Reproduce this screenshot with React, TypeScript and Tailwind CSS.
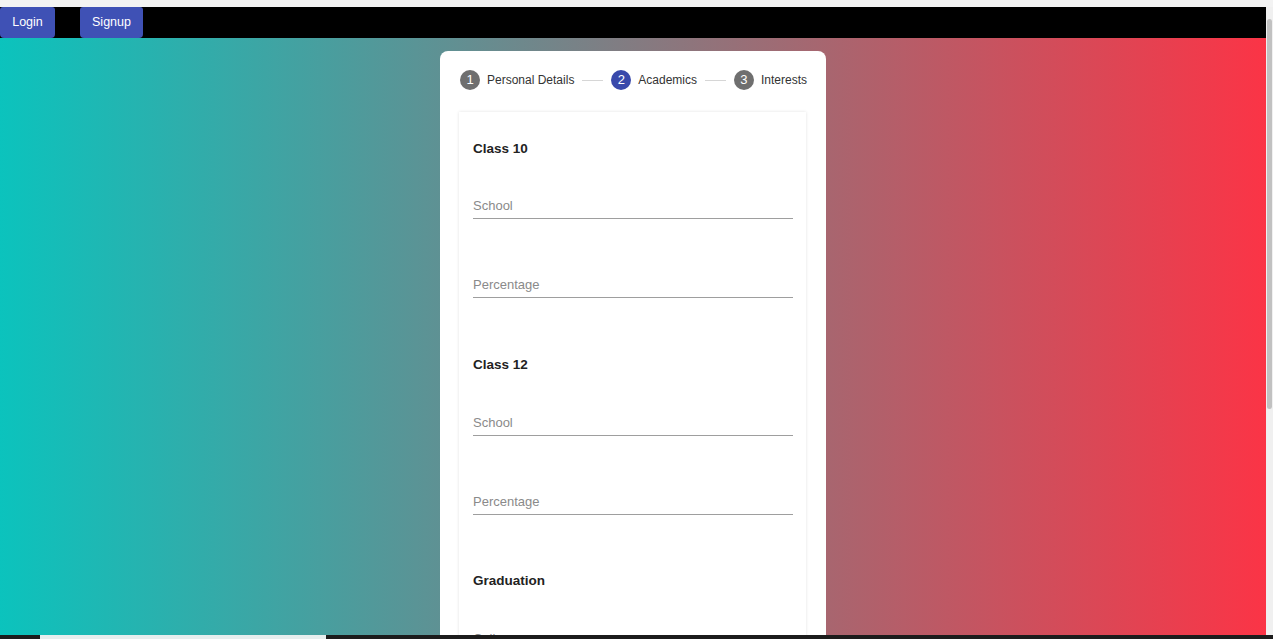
import React from "react";

const steps = [
  { n: 1, label: "Personal Details", active: false },
  { n: 2, label: "Academics", active: true },
  { n: 3, label: "Interests", active: false },
];

function Field({ label, mt }: { label: string; mt: string }) {
  return (
    <div
      className={`${mt} h-[32px] flex items-end pb-[2px] border-b border-[#9e9e9e] text-[13px] leading-[20px] text-[#8a8a8a]`}
    >
      {label}
    </div>
  );
}

function Heading({ text, mt }: { text: string; mt: string }) {
  return (
    <div className={`${mt} h-[20px] text-[13.5px] leading-[20px] font-bold text-[#222]`}>
      {text}
    </div>
  );
}

export default function App() {
  return (
    <div
      className="h-[639px] w-full flex flex-col overflow-hidden bg-[#f1f1f1]"
      style={{ fontFamily: '"Liberation Sans", Arial, sans-serif' }}
    >
      <div className="h-[7px] bg-[#f3f3f3]" />
      <div className="flex-1 flex min-h-0">
        <div className="flex-1 flex flex-col min-w-0">
          <nav className="h-[31px] bg-black flex items-stretch">
            <button className="w-[55px] bg-[#3f51b5] text-white text-[12.5px] rounded-b-[4px] rounded-t-[3px]">
              Login
            </button>
            <button className="ml-[25px] w-[63px] bg-[#3f51b5] text-white text-[12.5px] rounded-b-[4px] rounded-t-[3px]">
              Signup
            </button>
          </nav>
          <main className="flex-1 min-h-0 bg-[linear-gradient(to_right,#0bc3bd,#fb3446)] flex justify-center pt-[13px]">
            <div className="w-[386px] bg-white rounded-t-[8px] flex flex-col px-[19px]">
              <div className="flex items-center h-[20px] mt-[19px] pl-[1px]">
                {steps.map((s, i) => (
                  <React.Fragment key={s.n}>
                    {i > 0 && <div className="flex-1 mx-[8px] h-px bg-[#d6d6d6]" />}
                    <div className="flex items-center">
                      <span
                        className={`w-[20px] h-[20px] rounded-full flex items-center justify-center text-white text-[13px] ${
                          s.active ? "bg-[#3949ab]" : "bg-[#6f6f6f]"
                        }`}
                      >
                        {s.n}
                      </span>
                      <span className="ml-[7px] text-[12px] text-[#333]">{s.label}</span>
                    </div>
                  </React.Fragment>
                ))}
              </div>
              <div className="mt-[22px] flex-1 bg-white shadow-[0_0_3px_rgba(0,0,0,0.12)] pl-[14px] pr-[13px] pt-[27px] mr-[1px]">
                <Heading text="Class 10" mt="mt-0" />
                <Field label="School" mt="mt-[28px]" />
                <Field label="Percentage" mt="mt-[47px]" />
                <Heading text="Class 12" mt="mt-[57px]" />
                <Field label="School" mt="mt-[29px]" />
                <Field label="Percentage" mt="mt-[47px]" />
                <Heading text="Graduation" mt="mt-[56px]" />
                <Field label="College" mt="mt-[29px]" />
              </div>
            </div>
          </main>
        </div>
        <div className="w-[7px] bg-[#f0f0f0] flex flex-col pt-[12px]">
          <div className="h-[390px] mx-[1px] bg-[#c1c1c1] rounded-full" />
        </div>
      </div>
      <div className="h-[4px] bg-[#1c1c1c] flex">
        <div className="ml-[40px] w-[286px] bg-[#e6eeee]" />
      </div>
    </div>
  );
}
